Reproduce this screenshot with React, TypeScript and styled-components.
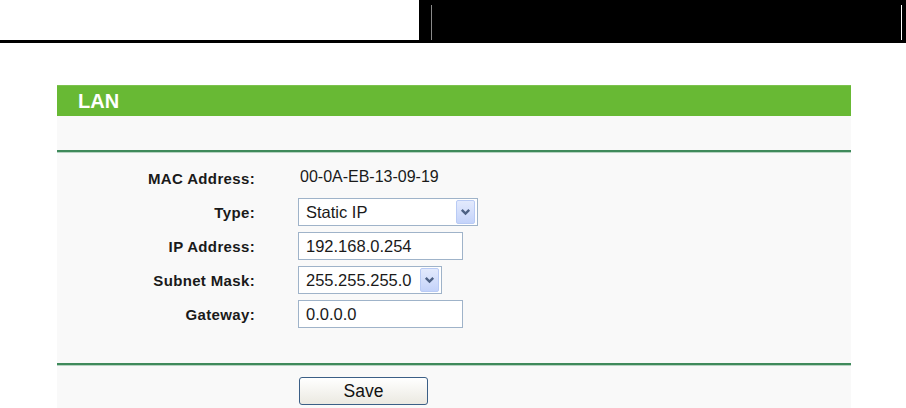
import React from 'react';
import styled, { createGlobalStyle } from 'styled-components';

const Global = createGlobalStyle`
  body {
    margin: 0;
    background: #ffffff;
    font-family: 'Liberation Sans', Arial, sans-serif;
  }
`;

const Page = styled.div`
  width: 906px;
  height: 408px;
  overflow: hidden;
  background: #ffffff;
`;

const TopBar = styled.div`
  display: flex;
  height: 43px;
`;

const TopLeft = styled.div`
  width: 419px;
  border-bottom: 3px solid #000000;
`;

const TopRight = styled.div`
  flex: 1;
  background: #000000;
  display: flex;
  justify-content: space-between;
  padding: 5px 4px 3px 12px;
`;

const Rule = styled.div<{ $light?: boolean }>`
  width: 1px;
  background: ${(p) => (p.$light ? '#ffffff' : '#8a8a8a')};
`;

const Panel = styled.div`
  margin: 42px 0 0 57px;
  width: 794px;
  background: #f9f9f9;
`;

const Title = styled.div`
  height: 31px;
  background: #68b934;
  border-top: 1px solid #7cc24e;
  box-sizing: border-box;
  color: #ffffff;
  font-weight: bold;
  font-size: 20px;
  line-height: 30px;
  padding-left: 21px;
`;

const Spacer = styled.div<{ $h: number }>`
  height: ${(p) => p.$h}px;
`;

const GreenLine = styled.div`
  height: 2px;
  background: #3f8a5b;
  border-bottom: 1px solid #b7d3c2;
`;

const Form = styled.div`
  display: grid;
  grid-template-columns: 198px 1fr;
  column-gap: 43px;
  row-gap: 6px;
  padding-top: 11px;
  align-items: center;
`;

const Label = styled.div`
  text-align: right;
  font-weight: bold;
  font-size: 15px;
  letter-spacing: 0.35px;
  color: #1a1a1a;
`;

const Value = styled.div`
  font-size: 16px;
  color: #1a1a1a;
  height: 28px;
  box-sizing: border-box;
  padding: 0 0 3px 2px;
  display: flex;
  align-items: center;
`;

const Field = styled.div<{ $w: number }>`
  width: ${(p) => p.$w}px;
  height: 28px;
  box-sizing: border-box;
  border: 1px solid #9fb3c9;
  background: #ffffff;
  display: flex;
  align-items: center;
  padding: 0 2px 0 7px;
  font-size: 16.5px;
  color: #1a1a1a;
`;

const FieldText = styled.span`
  flex: 1;
`;

const DropButton = styled.div`
  width: 19px;
  height: 24px;
  box-sizing: border-box;
  border: 1px solid #b9cbf5;
  border-radius: 2px;
  background: linear-gradient(#e3eafd, #c4d3fa);
  display: flex;
  align-items: center;
  justify-content: center;
`;

const Footer = styled.div`
  padding: 11px 0 0 242px;
  height: 42px;
  box-sizing: border-box;
`;

const SaveButton = styled.button`
  width: 129px;
  height: 28px;
  border: 1px solid #3b5f86;
  border-radius: 3px;
  background: linear-gradient(#ffffff, #ebe9e1);
  font-family: 'Liberation Sans', Arial, sans-serif;
  font-size: 17.5px;
  color: #111111;
  padding: 0;
`;

const Chevron = () => (
  <svg width="11" height="8" viewBox="0 0 11 8">
    <path d="M1.8 1.8 L5.5 5.5 L9.2 1.8" fill="none" stroke="#4d6185" strokeWidth="2.4" />
  </svg>
);

const rows: { label: string; kind: 'text' | 'select' | 'input'; value: string; w?: number }[] = [
  { label: 'MAC Address:', kind: 'text', value: '00-0A-EB-13-09-19' },
  { label: 'Type:', kind: 'select', value: 'Static IP', w: 180 },
  { label: 'IP Address:', kind: 'input', value: '192.168.0.254', w: 165 },
  { label: 'Subnet Mask:', kind: 'select', value: '255.255.255.0', w: 144 },
  { label: 'Gateway:', kind: 'input', value: '0.0.0.0', w: 165 },
];

export default function App() {
  return (
    <Page>
      <Global />
      <TopBar>
        <TopLeft />
        <TopRight>
          <Rule />
          <Rule $light />
        </TopRight>
      </TopBar>
      <Panel>
        <Title>LAN</Title>
        <Spacer $h={34} />
        <GreenLine />
        <Form>
          {rows.map((r) => (
            <React.Fragment key={r.label}>
              <Label>{r.label}</Label>
              {r.kind === 'text' ? (
                <Value>{r.value}</Value>
              ) : (
                <Field $w={r.w || 160}>
                  <FieldText>{r.value}</FieldText>
                  {r.kind === 'select' && (
                    <DropButton>
                      <Chevron />
                    </DropButton>
                  )}
                </Field>
              )}
            </React.Fragment>
          ))}
        </Form>
        <Spacer $h={35} />
        <GreenLine />
        <Footer>
          <SaveButton>Save</SaveButton>
        </Footer>
      </Panel>
    </Page>
  );
}
